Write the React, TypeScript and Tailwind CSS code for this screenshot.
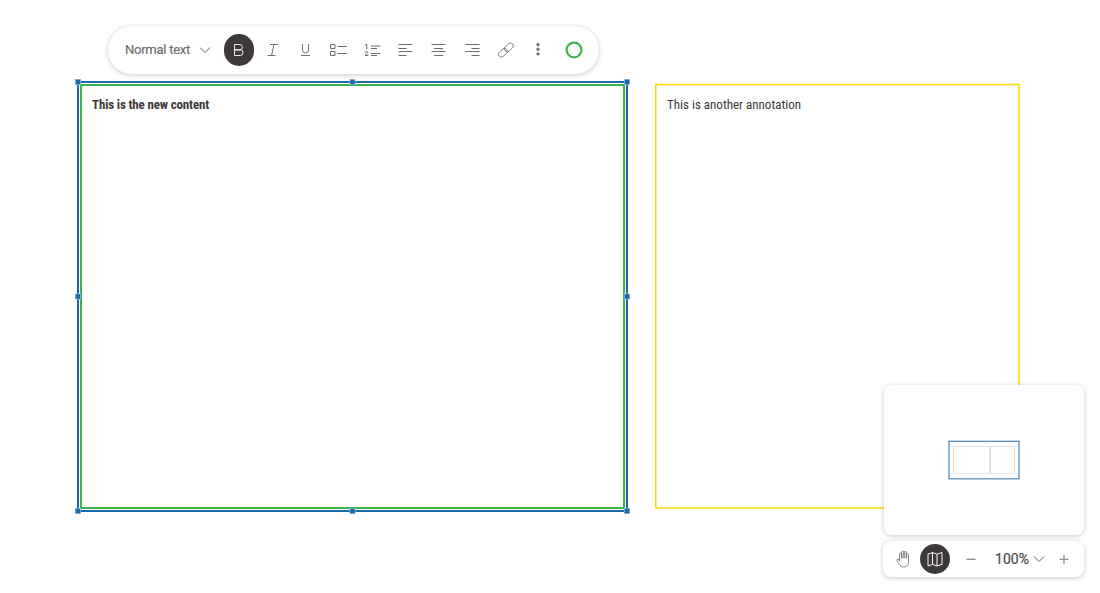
import type { ReactNode } from "react";

const handles: [number, number][] = [
  [78, 82], [352.5, 82], [627, 82],
  [78, 296.5], [627, 296.5],
  [78, 511], [352.5, 511], [627, 511],
];

function Icon({ children, className = "size-[33.3px]" }: { children: ReactNode; className?: string }) {
  return (
    <button className={`flex shrink-0 items-center justify-center ${className}`}>
      <svg width="20" height="20" viewBox="0 0 20 20" fill="none" stroke="currentColor" strokeWidth="1">
        {children}
      </svg>
    </button>
  );
}

function Chevron() {
  return (
    <svg className="shrink-0" width="12" height="8" viewBox="0 0 12 8" fill="none" stroke="#55504f" strokeWidth="0.9">
      <path d="M1 1.5 6 6.5 11 1.5" />
    </svg>
  );
}

function Toolbar() {
  return (
    <div className="absolute left-[108px] top-[26px] flex h-12 w-[490.5px] items-center rounded-full bg-white pl-[17px] text-[#706c6b] shadow-[0_1px_5px_rgba(0,0,0,0.22)]">
      <button className="flex w-[99px] shrink-0 items-center whitespace-nowrap text-[13px] leading-4">
        <span className="mr-[9px] w-[65px] tracking-[-0.25px] [-webkit-text-stroke:0.2px_#706c6b]">Normal text</span>
        <Chevron />
      </button>
      <Icon className="h-8 w-[30px] rounded-full bg-[#3d3938] text-white">
        <path d="M5.500 4.500h5.200a2.700 2.700 0 0 1 0 5.400H5.500zM5.500 9.900h5.700a2.800 2.800 0 0 1 0 5.600H5.500z" strokeWidth=".9" />
      </Icon>
      <div className="ml-[2.200px] flex shrink-0">
        <Icon><path d="M7 4.500h8M4.500 15.500h8M11 4.500l-2.400 11" /></Icon>
        <Icon><path d="M6.500 4v6a3 3 0 0 0 6 0V4M5 15.500h9" /></Icon>
        <Icon><path d="M1.500 4.500h4.500v4H1.500zM1.500 11.500h4.500v4H1.500zM8.500 6.500H18M8.500 13.500H18" /></Icon>
        <Icon>
          <path d="M2 5l1.700-.8v5M2 12.700c.3-1.700 3.300-1.500 2.700.2L2 15.500h3.300M8 6h9.500M8 8.500h6M8 13.500h9.500M8 15.500h6" />
        </Icon>
        <Icon><path d="M2.500 4.500h14M2.500 8.500h8M2.500 11.500h14M2.500 15.500h8" /></Icon>
        <Icon><path d="M2.500 4.500h14M5 8.500h9M2.500 11.500h14M5 15.500h9" /></Icon>
        <Icon><path d="M2.500 4.500h14M8.500 8.500h8M2.500 11.500h14M8.500 15.500h8" /></Icon>
        <Icon>
          <g transform="rotate(-42 10 10)" strokeWidth=".8">
            <rect x="0.800" y="7.200" width="10.200" height="5.600" rx="2.800" />
            <rect x="8.800" y="7.200" width="10.200" height="5.600" rx="2.800" />
          </g>
        </Icon>
        <Icon>
          <g fill="currentColor" stroke="none">
            <circle cx="9" cy="4.700" r="1.600" />
            <circle cx="9" cy="9.200" r="1.600" />
            <circle cx="9" cy="13.900" r="1.600" />
          </g>
        </Icon>
      </div>
      <svg className="ml-[9px] shrink-0" width="18" height="18" fill="none">
        <circle cx="9" cy="9" r="7.400" stroke="#3cb44b" strokeWidth="2.200" />
      </svg>
    </div>
  );
}

function Minimap() {
  return (
    <div className="absolute left-[884px] top-[385px] h-[150px] w-[200px] rounded-lg bg-white shadow-[0_1px_5px_rgba(0,0,0,0.22)]">
      <svg width="200" height="150" fill="none">
        <rect x="105" y="61" width="2" height="28" fill="#eef1f0" />
        <path d="M69.500 61.500H105.500V88.500H69.500zM106.500 61.500H130.500V88.500H106.500z" stroke="#dfe2e1" />
        <rect x="65" y="56.300" width="70" height="37.500" stroke="#1b69a8" strokeOpacity=".75" strokeWidth="1.300" />
      </svg>
    </div>
  );
}

function ZoomBar() {
  return (
    <div className="absolute left-[883px] top-[541px] flex h-9 w-[201px] items-center rounded-lg bg-white text-[#55504f] shadow-[0_1px_5px_rgba(0,0,0,0.22)]">
      <Icon className="ml-[5px] size-[30px]">
        <path
          strokeWidth=".7"
          d="M6.500 12V5.200c0-1.500 2.200-1.500 2.200 0V10M8.700 9V3.200c0-1.500 2.300-1.500 2.300 0V9.500M11 9V3.600c0-1.500 2.300-1.500 2.300 0V9.500M13.300 9V5.600c0-1.500 2.200-1.500 2.200 0v6.200c0 4.200-1.700 6.200-4.700 6.200-3.300 0-4.400-2-6.700-6-.9-1.600.9-2.500 1.800-1.200L6.900 12.500"
        />
      </Icon>
      <Icon className="ml-[2px] size-[30px] rounded-full bg-[#3d3938] text-white">
        <path d="M3 5.200 7.500 3.500v11.800L3 17zM7.500 3.500 12 5.200V17l-4.500-1.700M12 5.200l5-1.700v11.800L12 17" strokeWidth=".95" />
      </Icon>
      <Icon className="ml-[6px] size-[30px] text-[#8e8b8a]"><path d="M5.500 10.300h9" strokeWidth="1.300" /></Icon>
      <button className="ml-[9px] flex w-[50px] items-center gap-[4px] text-[14px] leading-4 text-[#4d4948]">
        <span className="w-[34px] shrink-0 [-webkit-text-stroke:0.2px_#4d4948]">100%</span><Chevron />
      </button>
      <Icon className="ml-[4px] size-[30px] text-[#8e8b8a]"><path d="M5.500 10.300h9M10 5.800v9" strokeWidth="1.300" /></Icon>
    </div>
  );
}

export default function App() {
  return (
    <main className="relative h-[593px] w-[1100px] overflow-hidden bg-white font-['Roboto',sans-serif]">
      <svg className="absolute inset-0" width="1100" height="593" fill="none">
        <rect x="655.750" y="84.500" width="363.250" height="423.500" stroke="#ffd700" strokeWidth="1.500" />
        <rect x="81" y="85" width="543" height="423" stroke="#3cb44b" strokeWidth="2" />
        <rect x="78" y="82" width="549" height="429" stroke="#1b69a8" strokeWidth="2" />
        {handles.map(([x, y]) => (
          <g key={`${x}-${y}`}>
            <rect x={x - 3} y={y - 3} width="6" height="6" fill="#a4c3dc" />
            <rect x={x - 2.300} y={y - 2.300} width="4.600" height="4.600" fill="#1b69a8" />
          </g>
        ))}
      </svg>
      <p className="absolute left-[92px] top-[97px] whitespace-nowrap text-[13px] font-bold leading-4 tracking-[-0.16px] text-[#3d3938] [font-stretch:75%]">This is the new content</p>
      <p className="absolute left-[667px] top-[97px] whitespace-nowrap text-[13px] leading-4 text-[#3d3938] [font-stretch:75%]">This is another annotation</p>
      <Toolbar />
      <Minimap />
      <ZoomBar />
    </main>
  );
}
